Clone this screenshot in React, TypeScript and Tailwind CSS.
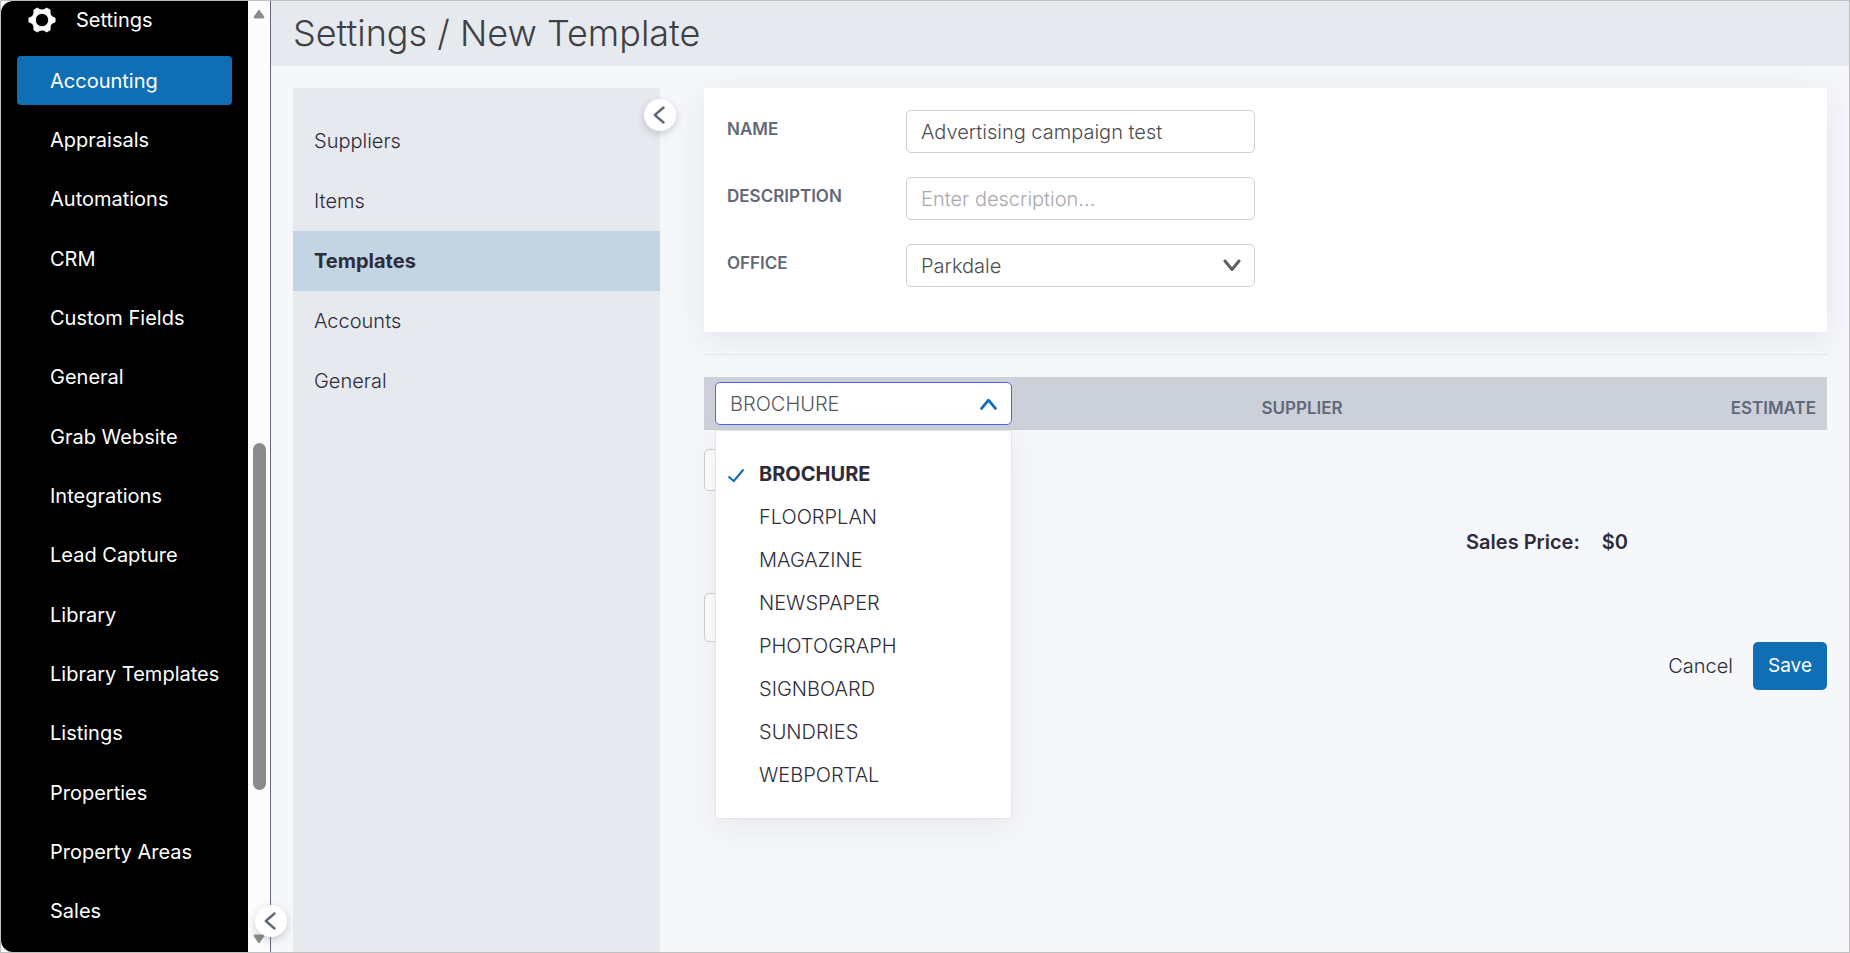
import React, { useState } from "react";

const settingsLinks = [
  "Accounting",
  "Appraisals",
  "Automations",
  "CRM",
  "Custom Fields",
  "General",
  "Grab Website",
  "Integrations",
  "Lead Capture",
  "Library",
  "Library Templates",
  "Listings",
  "Properties",
  "Property Areas",
  "Sales",
];

const sectionLinks = ["Suppliers", "Items", "Templates", "Accounts", "General"];

const itemTypes = [
  "BROCHURE",
  "FLOORPLAN",
  "MAGAZINE",
  "NEWSPAPER",
  "PHOTOGRAPH",
  "SIGNBOARD",
  "SUNDRIES",
  "WEBPORTAL",
];

function GearIcon() {
  return (
    <svg viewBox="0 0 28 28" className="size-7" aria-hidden="true">
      <path
        fillRule="evenodd"
        fill="#fff"
        stroke="#fff"
        strokeWidth="0.8"
        strokeLinejoin="round"
        d="M27.1 12 L27.1 16 Q21 17.6 22.2 24 L18.6 26 Q14 22 9.4 26 L5.8 24 Q7 17.6 0.9 16 L0.9 12 Q7 10.4 5.8 4 L9.4 2 Q14 6 18.6 2 L22.2 4 Q21 10.4 27.1 12 Z M14 7.4 A6.6 6.6 0 1 0 14 20.6 A6.6 6.6 0 1 0 14 7.4 Z"
      />
    </svg>
  );
}

function ChevronLeft() {
  return (
    <svg viewBox="0 0 12 18" className="h-[18px] w-3" aria-hidden="true">
      <path d="M10.5 1.5 L1.8 9 L10.5 16.5" fill="none" stroke="#5f697a" strokeWidth="2.4" strokeLinecap="round" strokeLinejoin="round" />
    </svg>
  );
}

function CollapseButton({ label }: { label: string }) {
  return (
    <button
      type="button"
      aria-label={label}
      className="flex size-8 items-center justify-center rounded-full bg-white pr-0.5 shadow-[0_3px_8px_rgba(40,50,70,0.22)]"
    >
      <ChevronLeft />
    </button>
  );
}

function Sidebar() {
  return (
    <nav aria-label="Settings" className="flex w-[247px] shrink-0 flex-col rounded-l-xl bg-black pb-4 text-white">
      <div className="flex h-[55px] shrink-0 items-start gap-5 pl-[27px] pt-[5px]">
        <GearIcon />
        <span className="text-[20px] leading-7">Settings</span>
      </div>
      <div className="flex flex-1 flex-col justify-between px-4">
        {settingsLinks.map((name, i) => (
          <a
            key={name}
            href="#"
            aria-current={i === 0 ? "page" : undefined}
            className={
              i === 0
                ? "flex h-[49px] items-center whitespace-nowrap rounded bg-[#0f6eb4] pl-[33px] text-[20px]"
                : "flex h-[49px] items-center whitespace-nowrap rounded pl-[33px] text-[20px]"
            }
          >
            {name}
          </a>
        ))}
      </div>
    </nav>
  );
}

function ScrollTrack() {
  return (
    <div className="relative flex w-[23px] shrink-0 flex-col items-center border-r border-[#5f697a] bg-[#fcfcfc] pt-2">
      <svg viewBox="0 0 12 10" className="h-2.5 w-3 shrink-0" aria-hidden="true">
        <path d="M6 1 L11 8 Q11 9 10 9 L2 9 Q1 9 1 8 Z" fill="#8b8b8b" stroke="#8b8b8b" strokeLinejoin="round" />
      </svg>
      <div className="h-[424px] shrink" />
      <div className="h-[347px] w-[13px] rounded-full bg-[#8b8b8b]" />
      <div className="flex-1" />
      <svg viewBox="0 0 12 10" className="mb-2 h-2.5 w-3 shrink-0" aria-hidden="true">
        <path d="M6 9 L11 2 Q11 1 10 1 L2 1 Q1 1 1 2 Z" fill="#8b8b8b" stroke="#8b8b8b" strokeLinejoin="round" />
      </svg>
      <div className="absolute -right-[17px] bottom-[15px] z-10">
        <CollapseButton label="Collapse navigation" />
      </div>
    </div>
  );
}

function SectionNav() {
  return (
    <nav aria-label="Accounting" className="relative flex w-[367px] shrink-0 flex-col bg-[#e6e9ee] pt-[23px] text-[#2e2c3a]">
      {sectionLinks.map((name) => (
        <a
          key={name}
          href="#"
          className={
            name === "Templates"
              ? "flex h-[60px] items-center bg-[#c3d5e3] pl-[21px] text-[20px] font-bold"
              : "flex h-[60px] items-center pl-[21px] text-[20px] font-light"
          }
        >
          {name}
        </a>
      ))}
      <div className="absolute -right-4 top-[11px]">
        <CollapseButton label="Collapse section menu" />
      </div>
    </nav>
  );
}

function DetailsCard() {
  const [name, setName] = useState("Advertising campaign test");
  const label = "w-[179px] shrink-0 pt-2 text-[17px] leading-[22px] font-semibold text-[#5f697a]";
  const field =
    "h-[43px] w-full rounded-[5px] border border-[#cdced6] bg-white px-3.5 text-[20px] font-light text-[#4c4c50] placeholder:text-[#a8a8ab]";
  return (
    <section className="flex h-[244px] flex-col gap-6 bg-white pl-[23px] pt-[22px] shadow-[0_8px_30px_rgba(60,60,80,0.09)]">
      <div className="flex">
        <label htmlFor="name" className={label}>NAME</label>
        <div className="w-[349px]">
          <input id="name" className={field} value={name} onChange={(e) => setName(e.target.value)} />
        </div>
      </div>
      <div className="flex">
        <label htmlFor="description" className={label}>DESCRIPTION</label>
        <div className="w-[349px]">
          <input id="description" className={field} placeholder="Enter description..." />
        </div>
      </div>
      <div className="flex">
        <label htmlFor="office" className={label}>OFFICE</label>
        <div className="relative w-[349px]">
          <select id="office" className={`${field} appearance-none`}>
            <option>Parkdale</option>
          </select>
          <svg viewBox="0 0 18 13" className="pointer-events-none absolute right-3.5 top-[15px] h-[13px] w-[18px]" aria-hidden="true">
            <path d="M2 2 L9 10.5 L16 2" fill="none" stroke="#5f6064" strokeWidth="3" strokeLinecap="round" strokeLinejoin="round" />
          </svg>
        </div>
      </div>
    </section>
  );
}

function TypePicker() {
  const [selected, setSelected] = useState("BROCHURE");
  return (
    <div className="relative w-[297px]">
      <button
        type="button"
        aria-haspopup="listbox"
        aria-expanded="true"
        className="flex h-[43px] w-full items-center justify-between rounded-[5px] border border-[#4f63ee] bg-white px-3.5 text-[20px] font-light text-[#58585c]"
      >
        {selected}
        <svg viewBox="0 0 17 12" className="h-3 w-[17px]" aria-hidden="true">
          <path d="M1.6 10.4 L8.5 2.2 L15.4 10.4" fill="none" stroke="#0f6eb4" strokeWidth="2.8" strokeLinecap="round" strokeLinejoin="round" />
        </svg>
      </button>
      <ul
        role="listbox"
        aria-label="Item type"
        className="absolute left-0 top-12 z-10 w-full border border-[#e3e6ec] bg-white pb-[22px] pt-[21px] shadow-[0_8px_30px_rgba(60,60,80,0.08)]"
      >
        {itemTypes.map((type) => (
          <li
            key={type}
            role="option"
            aria-selected={type === selected}
            onClick={() => setSelected(type)}
            className={
              type === selected
                ? "flex h-[43px] items-center text-[20px] font-bold text-[#2e2c3a]"
                : "flex h-[43px] items-center text-[20px] font-light text-[#2e2c3a]"
            }
          >
            <span className="w-[43px] pl-[11px] pt-1">
              {type === selected && (
                <svg viewBox="0 0 18 15" className="h-[15px] w-[18px]" aria-hidden="true">
                  <path d="M1.5 8.5 L6.8 13 L16.5 1.5" fill="none" stroke="#0f6eb4" strokeWidth="2" />
                </svg>
              )}
            </span>
            {type}
          </li>
        ))}
      </ul>
    </div>
  );
}

function ItemsTable() {
  return (
    <table className="mt-[22px] w-full table-fixed border-collapse">
      <thead>
        <tr className="h-[53px] bg-[#cbd0d9] text-[17px] leading-[22px] text-[#5f697a]">
          <th className="w-1/2 py-0 pl-[11px] text-left"><TypePicker /></th>
          <th className="w-1/4 pt-2 text-left font-semibold"><span className="-ml-1">SUPPLIER</span></th>
          <th className="w-1/4 pr-[11px] pt-2 text-right font-semibold">ESTIMATE</th>
        </tr>
      </thead>
      <tbody>
        <tr>
          <td className="pt-[19px]">
            <input aria-label="Item" className="block h-[42px] w-[280px] rounded-[5px] border border-[#cdced6] bg-[#fdfdfd] px-3" />
          </td>
          <td />
          <td />
        </tr>
      </tbody>
    </table>
  );
}

export default function App() {
  return (
    <div className="flex min-h-screen border border-[#bfbfbf] bg-white font-['Inter','Liberation_Sans',sans-serif]">
      <Sidebar />
      <ScrollTrack />
      <div className="flex min-w-0 flex-1 flex-col bg-[#f5f7fb]">
        <header className="flex h-[65px] items-center bg-[#e6e9ee] pb-0.5 pl-[22px]">
          <h1 className="text-[36px] leading-10 font-light text-[#3d4045]">Settings / New Template</h1>
        </header>
        <div className="flex flex-1 gap-11 px-[22px] pt-[22px]">
          <SectionNav />
          <main className="min-w-0 flex-1">
            <DetailsCard />
            <hr className="mt-[22px] border-[#e3e6ec]" />
            <ItemsTable />
            <p className="mr-[199px] mt-[39px] flex justify-end gap-[22px] text-[20px] leading-6 font-semibold text-[#2e2c3a]">
              <span>Sales Price:</span>
              <span>$0</span>
            </p>
            <button
              type="button"
              aria-label="Add item"
              className="mt-[39px] block h-[49px] w-[200px] rounded-[5px] border border-[#cdced6] bg-[#fdfdfd]"
            />
            <div className="flex justify-end gap-5">
              <button type="button" className="text-[20px] font-light text-[#2e2c3a]">Cancel</button>
              <button type="button" className="h-12 w-[74px] rounded-[5px] bg-[#0f6eb4] text-[19px] text-white">Save</button>
            </div>
          </main>
        </div>
      </div>
    </div>
  );
}
